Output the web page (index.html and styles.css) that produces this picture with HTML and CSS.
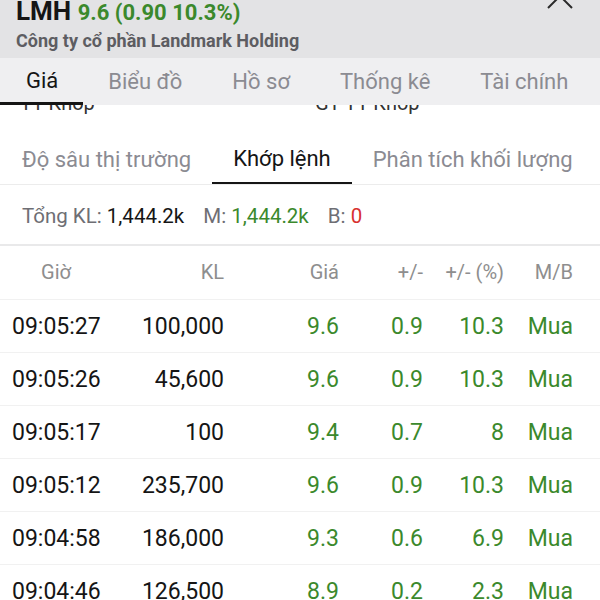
FILE: index.html
```html
<!DOCTYPE html>
<html lang="vi">

<head>
    <meta charset="UTF-8">
    <meta name="viewport" content="width=device-width, initial-scale=1.0">
    <title>LMH - Khớp lệnh</title>
    <link rel="stylesheet" href="styles.css">
</head>

<body>

    <div class="top">
        <div class="title">
            <div class="ticker">LMH <span class="up">9.6 (0.90 10.3%)</span></div>
            <div class="company">Công ty cổ phần Landmark Holding</div>
        </div>
        <div class="close">
            <svg width="30" height="30" viewBox="0 0 30 30">
                <path d="M3 3 L27 27 M27 3 L3 27" stroke="#2a2a2a" stroke-width="2" fill="none" />
            </svg>
        </div>
    </div>

    <div class="tabs">
        <span class="on">Giá</span>
        <span>Biểu đồ</span>
        <span>Hồ sơ</span>
        <span>Thống kê</span>
        <span>Tài chính</span>
    </div>

    <!-- phần nội dung đang cuộn nằm dưới thanh tab -->
    <div class="peek">
        <div class="peek-line">
            <span>TT Khớp</span>
            <span>GT TT Khớp</span>
        </div>
    </div>

    <div class="subtabs">
        <span>Độ sâu thị trường</span>
        <span class="on">Khớp lệnh</span>
        <span>Phân tích khối lượng</span>
    </div>

    <div class="summary">
        <span class="lbl">Tổng KL:</span> <b>1,444.2k</b>
        <span class="lbl gap">M:</span> <b class="up">1,444.2k</b>
        <span class="lbl gap">B:</span> <b class="down">0</b>
    </div>

    <div class="trades">
        <div class="row head">
            <span class="c">Giờ</span>
            <span>KL</span>
            <span>Giá</span>
            <span>+/-</span>
            <span>+/- (%)</span>
            <span>M/B</span>
        </div>
        <div class="row">
            <span>09:05:27</span><span>100,000</span>
            <span class="up">9.6</span><span class="up">0.9</span><span class="up">10.3</span><span class="up">Mua</span>
        </div>
        <div class="row">
            <span>09:05:26</span><span>45,600</span>
            <span class="up">9.6</span><span class="up">0.9</span><span class="up">10.3</span><span class="up">Mua</span>
        </div>
        <div class="row">
            <span>09:05:17</span><span>100</span>
            <span class="up">9.4</span><span class="up">0.7</span><span class="up">8</span><span class="up">Mua</span>
        </div>
        <div class="row">
            <span>09:05:12</span><span>235,700</span>
            <span class="up">9.6</span><span class="up">0.9</span><span class="up">10.3</span><span class="up">Mua</span>
        </div>
        <div class="row">
            <span>09:04:58</span><span>186,000</span>
            <span class="up">9.3</span><span class="up">0.6</span><span class="up">6.9</span><span class="up">Mua</span>
        </div>
        <div class="row">
            <span>09:04:46</span><span>126,500</span>
            <span class="up">8.9</span><span class="up">0.2</span><span class="up">2.3</span><span class="up">Mua</span>
        </div>
    </div>

</body>

</html>
```

FILE: styles.css
```css
body {
    margin: 0;
    font-family: Roboto, "Noto Sans", sans-serif;
    color: #151515;
    background: #fff;
    overflow: hidden;
}

.up {
    color: #3b892c;
}

.down {
    color: #d8302f;
}

/* header */
.top {
    display: flex;
    justify-content: space-between;
    height: 58px;
    background-color: #e3e3e5;
    padding: 0 16px;
}

.ticker {
    margin-top: -2px;
    font-size: 26px;
    line-height: 26px;
    font-weight: bold;
}

.ticker span {
    font-size: 22px;
}

.company {
    margin-top: 4px;
    font-size: 18px;
    font-weight: bold;
    color: #5d5d62;
}

.close {
    margin: -19px 9px 0 0;
}

/* tabs */
.tabs {
    display: flex;
    height: 47px;
    background-color: #efeff1;
    font-size: 22px;
    color: #8b8b92;
    white-space: nowrap;
}

.tabs span {
    line-height: 48px;
    margin-left: 50px;
}

.tabs .on {
    margin-left: 0;
    padding: 0 25px 0 26px;
    color: #151515;
    border-bottom: 3px solid #151515;
    line-height: 45px;
}

.tabs .on + span {
    margin-left: 25px;
}

.peek {
    height: 30px;
    overflow: hidden;
}

.peek-line {
    margin-top: -12px;
    font-size: 20px;
    line-height: 20px;
    color: #333;
    display: flex;
    white-space: nowrap;
}

.peek-line span:first-child {
    width: 295px;
    padding-left: 20px;
}

/* sub tabs */
.subtabs {
    display: flex;
    height: 49px;
    border-bottom: 1px solid #ececec;
    font-size: 22px;
    color: #8b8b92;
    white-space: nowrap;
}

.subtabs span {
    line-height: 49px;
    padding: 0 21px;
}

.subtabs span:first-child {
    padding-left: 22px;
}

.subtabs .on {
    color: #151515;
    border-bottom: 2px solid #151515;
    line-height: 47px;
}

.summary {
    height: 59px;
    line-height: 62px;
    padding-left: 22px;
    font-size: 20.5px;
    border-bottom: 2px solid #e9e9ea;
}

.summary b {
    font-weight: normal;
}

.lbl {
    color: #6e6e74;
}

.gap {
    margin-left: 14px;
}

/* bảng khớp lệnh */
.row {
    display: grid;
    grid-template-columns: 88px 124px 115px 84px 81px 69px;
    padding-left: 12px;
    height: 52px;
    line-height: 54px;
    font-size: 23px;
    border-bottom: 1px solid #f1f1f1;
}

.row span {
    text-align: right;
}

.row span:first-child {
    text-align: left;
}

.row.head {
    height: 53px;
    line-height: 53px;
    font-size: 20px;
    color: #8e8e8e;
}

.row.head .c {
    text-align: center;
}
```
